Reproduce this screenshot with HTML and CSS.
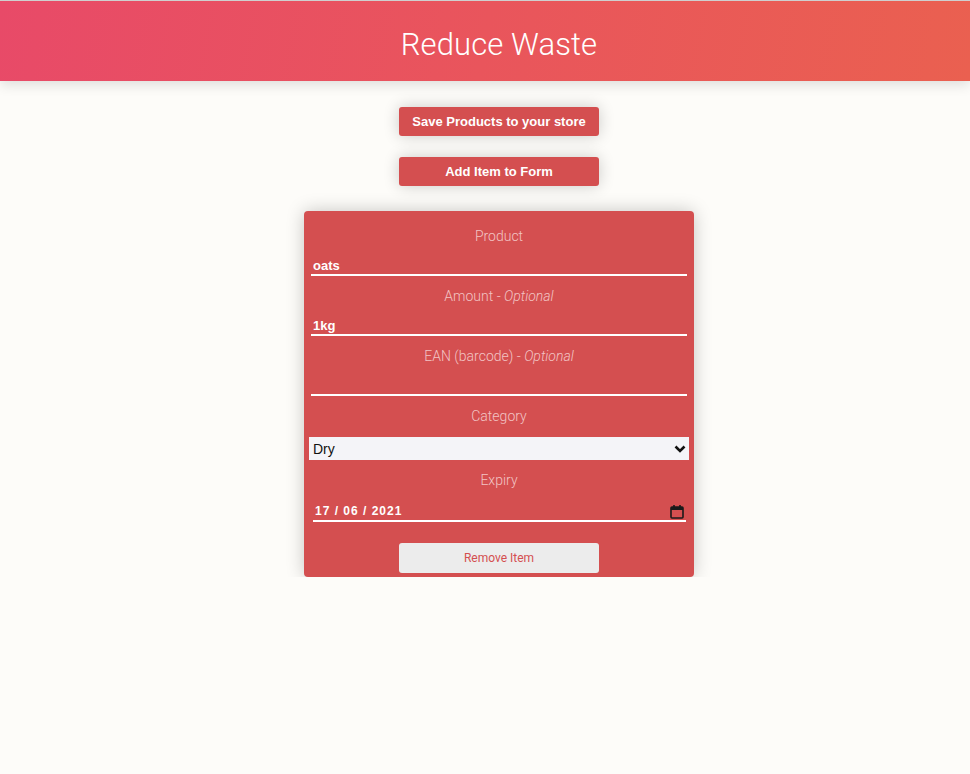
FILE: index.html
```html
<!DOCTYPE html>
<html lang="en">
<head>
    <meta charset="UTF-8">
    <meta name="viewport" content="width=device-width, initial-scale=1.0">
    <title>Reduce Waste</title>
    <link rel="stylesheet" href="styles.css">
</head>
<body>
    <header class="header">
        <h1>Reduce Waste</h1>
    </header>

    <div class="container">
        <button class="action">Save Products to your store</button>
        <button class="action">Add Item to Form</button>

        <form class="card">
            <label class="label">Product</label>
            <input class="field" type="text" value="oats">

            <label class="label">Amount - <em>Optional</em></label>
            <input class="field" type="text" value="1kg">

            <label class="label">EAN (barcode) - <em>Optional</em></label>
            <input class="field" type="text" value="">

            <label class="label">Category</label>
            <div class="select-wrap">
                <select class="select">
                    <option>Dry</option>
                    <option>Fresh</option>
                    <option>Frozen</option>
                </select>
                <svg class="chevron" width="12" height="8" viewBox="0 0 12 8">
                    <path d="M1.5 1.5 L6 6 L10.5 1.5" fill="none" stroke="#111" stroke-width="2.6"/>
                </svg>
            </div>

            <label class="label">Expiry</label>
            <div class="date-wrap">
                <input class="field date" type="text" value="17 / 06 / 2021">
                <svg class="calendar" width="14" height="15" viewBox="0 0 14 15">
                    <rect x="1" y="3" width="12" height="11" rx="1" fill="none" stroke="#1a1a1a" stroke-width="1.6"/>
                    <rect x="1" y="3" width="12" height="3" fill="#1a1a1a"/>
                    <rect x="3.2" y="1" width="1.6" height="3" fill="#1a1a1a"/>
                    <rect x="9.2" y="1" width="1.6" height="3" fill="#1a1a1a"/>
                </svg>
            </div>

            <button class="remove" type="button">Remove Item</button>
        </form>
    </div>
</body>
</html>
```
FILE: styles.css
```css
body {
    margin: 0;
    padding: 0;
    background-color: #fdfcf9;
    font-family: Roboto, "Liberation Sans", sans-serif;
}

.header {
    box-sizing: border-box;
    height: 81px;
    padding: 6px 0 0 28px;
    border-top: 1px solid #cfcfcf;
    background: linear-gradient(100deg, #e84a68, #ea6050);
    box-shadow: 0 4px 12px rgba(0, 0, 0, 0.12);
    display: flex;
    justify-content: center;
    align-items: center;
}

.header h1 {
    margin: 0;
    color: #fff;
    font-weight: 300;
    font-size: 31px;
    letter-spacing: 0.1px;
}

.container {
    display: flex;
    flex-direction: column;
    align-items: center;
    padding: 26px 0 0 28px;
}

.action {
    width: 200px;
    height: 29px;
    margin-bottom: 21px;
    border: none;
    border-radius: 3px;
    background-color: #d44f50;
    color: #fff;
    font-family: "Liberation Sans", Arial, sans-serif;
    font-weight: bold;
    font-size: 13px;
    box-shadow: 0 0 16px rgba(0, 0, 0, 0.2);
    cursor: pointer;
}

.card {
    width: 376px;
    margin-top: 4px;
    padding: 5px 7px 4px;
    background-color: #d44f50;
    border-radius: 4px;
    box-shadow: 0 0 18px rgba(0, 0, 0, 0.22);
    display: flex;
    flex-direction: column;
}

.label {
    margin-top: 10px;
    line-height: 20px;
    height: 20px;
    text-align: center;
    color: #f2c4c4;
    font-weight: 300;
    font-size: 14px;
}

.label em {
    font-style: italic;
}

.field {
    box-sizing: border-box;
    height: 30px;
    width: 100%;
    padding: 10px 2px 0;
    border: none;
    border-bottom: 2px solid #fff;
    background: transparent;
    color: #fff;
    font-family: "Liberation Sans", Arial, sans-serif;
    font-weight: bold;
    font-size: 13px;
    outline: none;
}

.select-wrap {
    position: relative;
    margin: 11px -2px 0;
}

.select {
    width: 100%;
    height: 23px;
    padding: 0 4px;
    border: none;
    border-radius: 0;
    background-color: #f4f4f8;
    color: #111;
    font-family: "Liberation Sans", Arial, sans-serif;
    font-size: 14px;
    -webkit-appearance: none;
    appearance: none;
}

.chevron {
    position: absolute;
    right: 3px;
    top: 8px;
}

.date-wrap {
    position: relative;
    margin: 0 1px 0 2px;
}

.date {
    height: 32px;
    padding-top: 12px;
    letter-spacing: 1px;
    font-size: 12px;
}

.calendar {
    position: absolute;
    right: 2px;
    top: 14px;
}

.remove {
    align-self: center;
    width: 200px;
    height: 30px;
    margin-top: 21px;
    border: none;
    border-radius: 3px;
    background-color: #ececec;
    color: #d44f50;
    font-family: Roboto, "Liberation Sans", sans-serif;
    font-size: 12px;
    cursor: pointer;
}
```
